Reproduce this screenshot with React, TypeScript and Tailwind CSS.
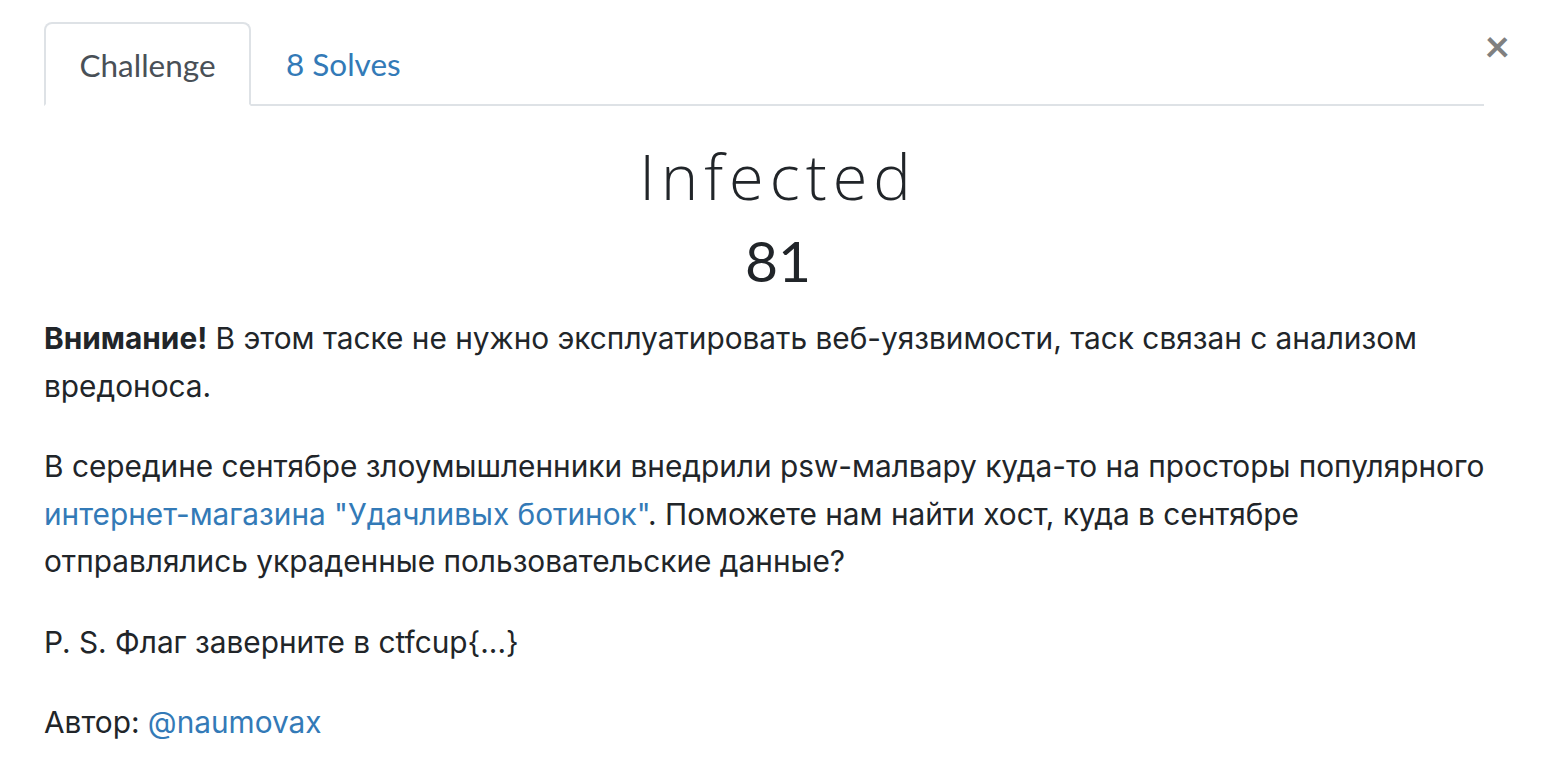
export default function App() {
  return (
    <div className="relative min-h-screen bg-white px-[44px] pt-[22px] font-['Inter',sans-serif] text-[#212529]">
      <button className="absolute right-[46px] top-[23px] font-['Lato',sans-serif] text-[44px] font-bold leading-none text-[#808080]">
        ×
      </button>

      <ul className="flex w-[1440px] border-b-2 border-[#dee2e6] font-['Lato',sans-serif] text-[31.5px]">
        <li className="-mb-[2px] flex h-[84px] w-[207px] items-center justify-center rounded-t-[8px] border-2 border-b-white border-[#dee2e6] bg-white pt-[3px] text-[#495057]">
          Challenge
        </li>
        <li className="flex h-[82px] items-center px-[35px] pt-[3px] text-[#337ab7]">8 Solves</li>
      </ul>

      <div className="pt-[34px] text-center text-[#212529]">
        <h3 className="font-['Open_Sans',sans-serif] text-[63px] font-light leading-[72px] tracking-[6px]">Infected</h3>
        <h4 className="mt-[16px] font-['Lato',sans-serif] text-[57px] leading-[64px]">81</h4>
      </div>

      <div className="mt-[23px] pr-[12px] text-[29.8px] leading-[47.5px]">
        <p className="mb-[33px]">
          <strong className="font-bold">Внимание!</strong> В этом таске не нужно эксплуатировать веб-уязвимости, таск
          связан с анализом вредоноса.
        </p>
        <p className="mb-[33px]">
          В середине сентябре злоумышленники внедрили psw-малвару куда-то на просторы популярного{" "}
          <a className="text-[#337ab7]">интернет-магазина "Удачливых ботинок"</a>. Поможете нам найти хост, куда в
          сентябре отправлялись украденные пользовательские данные?
        </p>
        <p className="mb-[33px]">P. S. Флаг заверните в ctfcup{"{...}"}</p>
        <p>
          Автор: <a className="text-[#337ab7]">@naumovax</a>
        </p>
      </div>
    </div>
  );
}
